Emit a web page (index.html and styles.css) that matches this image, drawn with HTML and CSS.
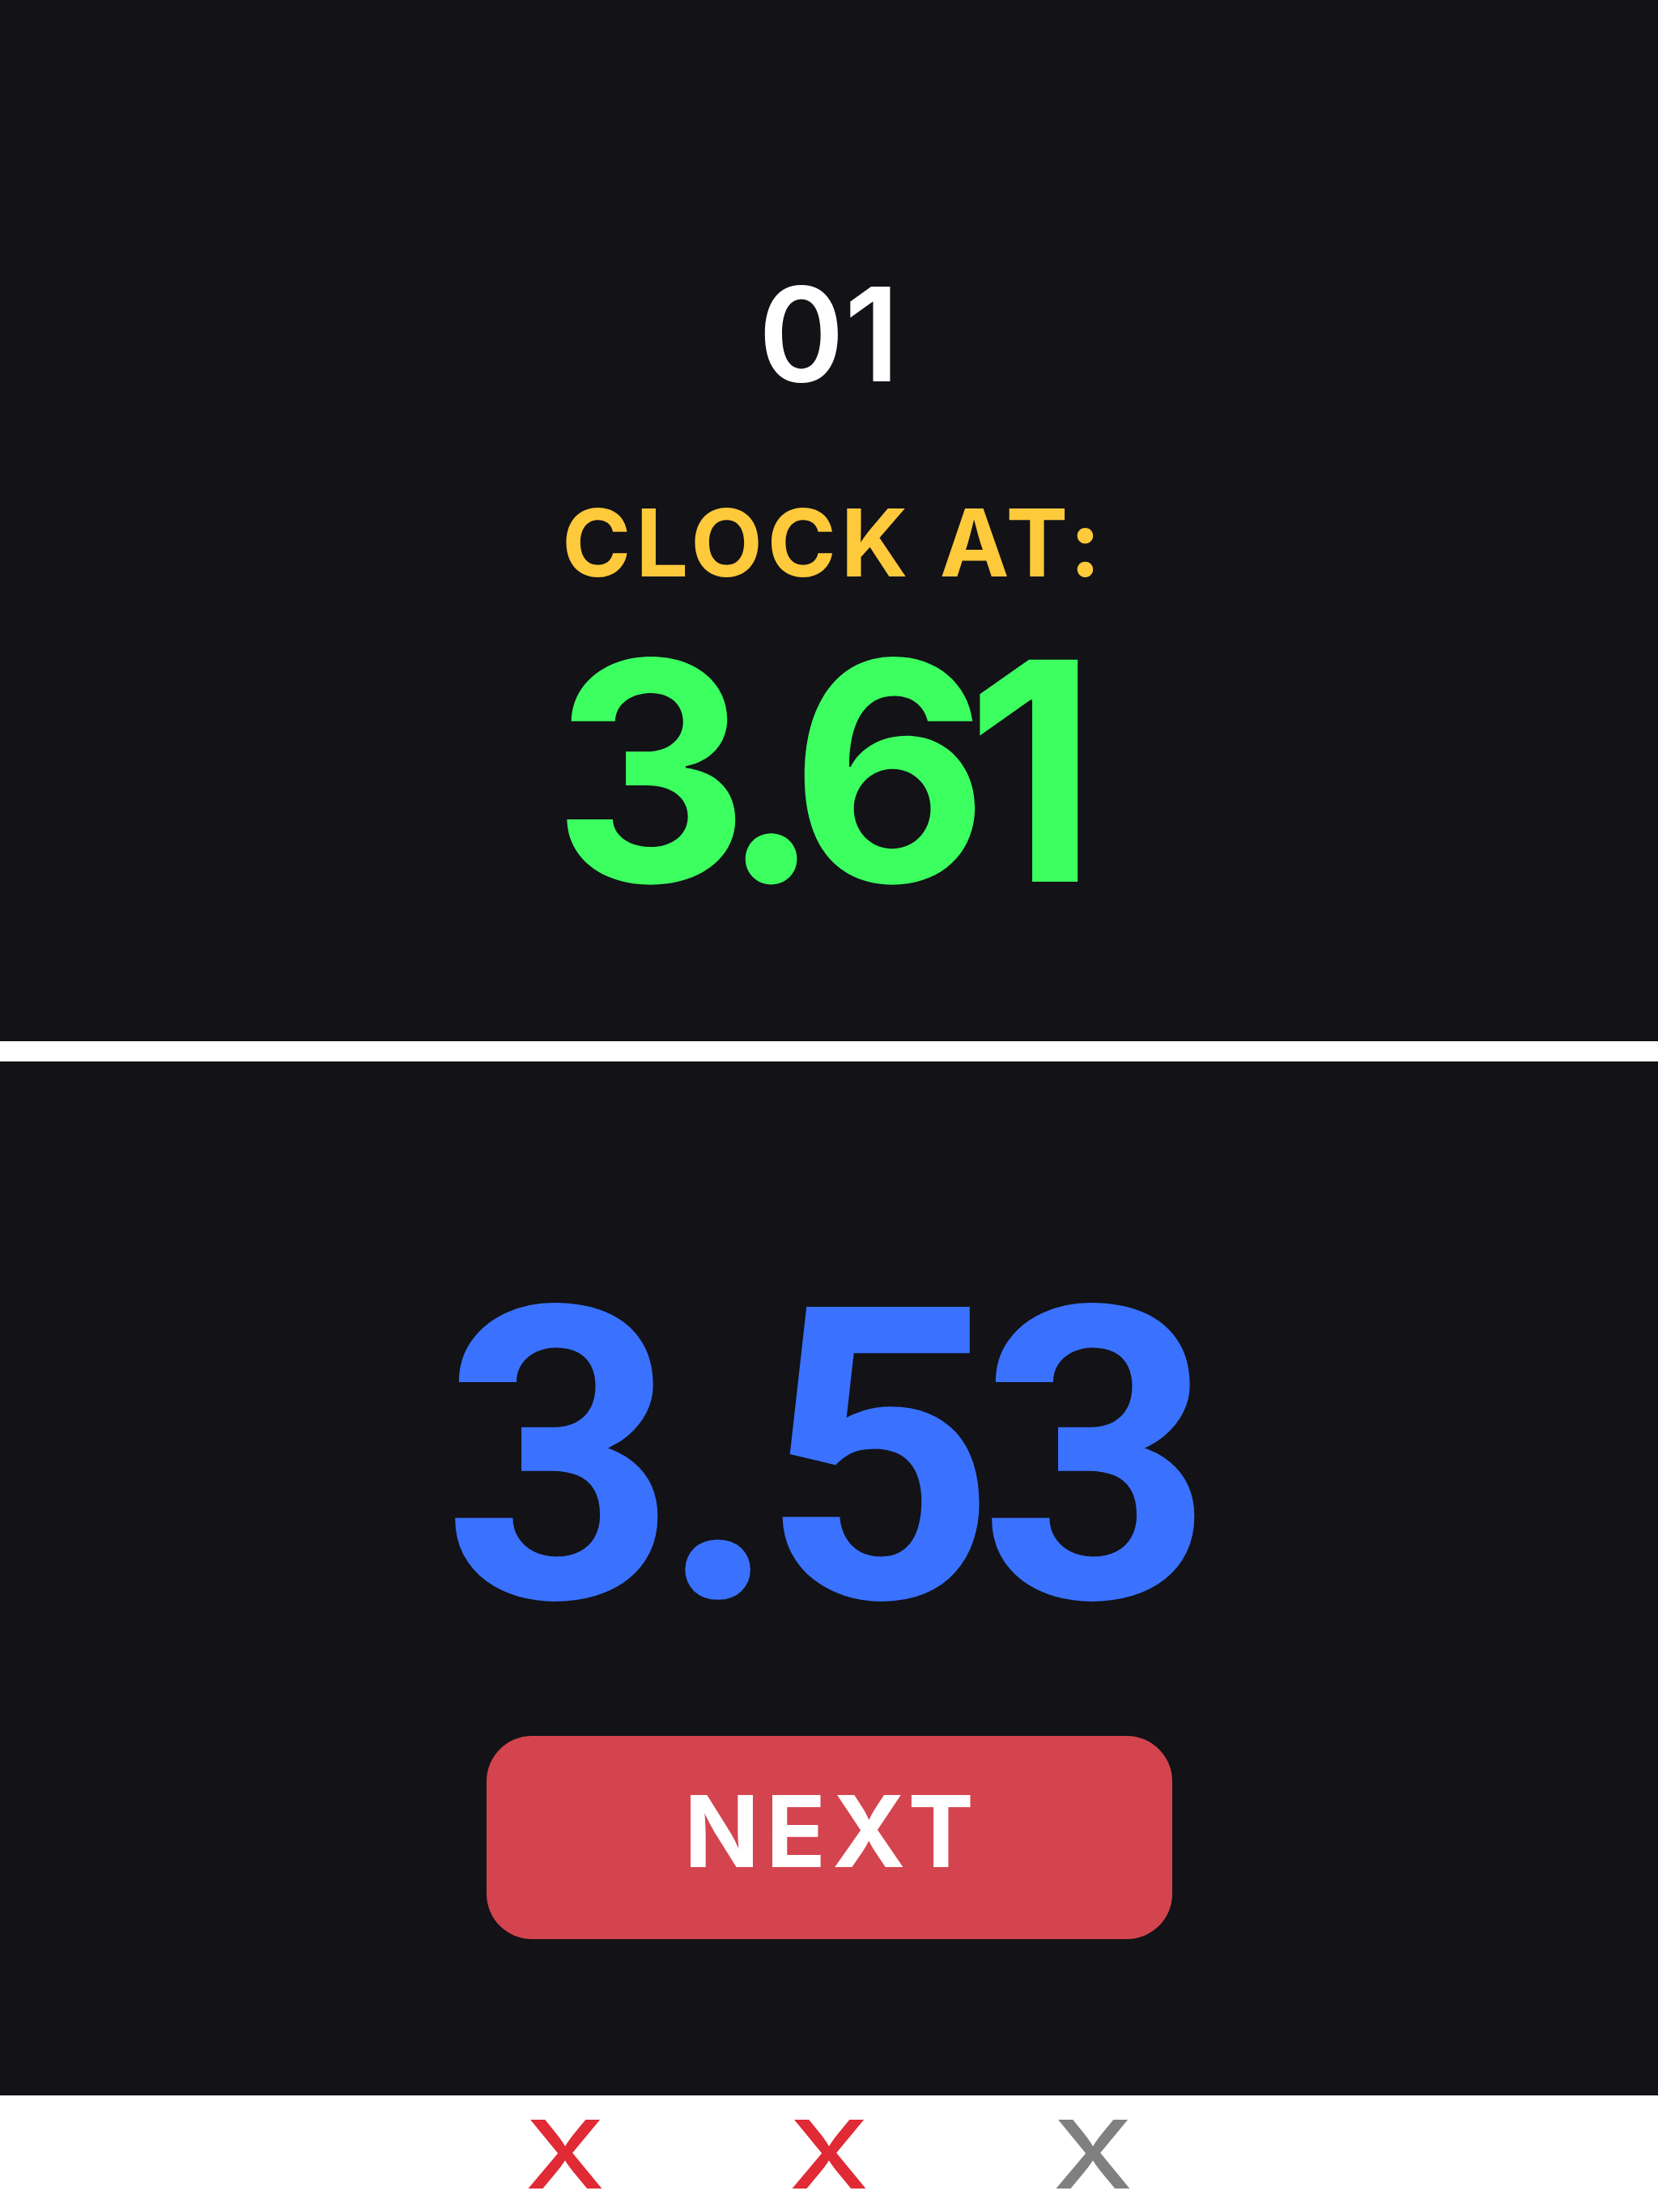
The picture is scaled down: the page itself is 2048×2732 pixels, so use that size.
FILE: index.html
```html
<!DOCTYPE html>
<html lang="en">
<head>
<meta charset="utf-8">
<title>Clock At</title>
<link rel="stylesheet" href="styles.css">
</head>
<body>
  <main class="app">
    <section class="panel panel-top">
      <div class="round">01</div>
      <div class="label">CLOCK AT:</div>
      <div class="target">3.61</div>
    </section>
    <section class="panel panel-bottom">
      <div class="result">3.53</div>
      <button class="next" type="button">NEXT</button>
    </section>
    <footer class="marks">
      <span class="mark mark-miss">X</span>
      <span class="mark mark-miss">X</span>
      <span class="mark mark-left">X</span>
    </footer>
  </main>
</body>
</html>
```
FILE: styles.css
```css
* { box-sizing: border-box; }
html, body { margin: 0; padding: 0; }
body {
  background: #ffffff;
  font-family: Inter, "Noto Sans", "Liberation Sans", sans-serif;
}
.app {
  width: 2048px;
  height: 2732px;
  display: flex;
  flex-direction: column;
  gap: 25px;
}
.panel {
  background: #121217;
  display: flex;
  flex-direction: column;
  align-items: center;
}
.panel-top {
  height: 1286px;
  padding-top: 332px;
}
.panel-bottom {
  height: 1277px;
  padding-top: 237px;
  margin-bottom: -25px;
}
.round {
  color: #ffffff;
  font-size: 161px;
  line-height: 1;
  font-weight: 600;
}
.label {
  margin-top: 120px;
  color: #ffc93c;
  font-size: 115px;
  line-height: 1;
  font-weight: 700;
  letter-spacing: 6px;
  padding-left: 12px;
}
.target {
  margin-top: 36px;
  color: #3cff60;
  font-size: 377px;
  line-height: 1;
  font-weight: 700;
  letter-spacing: -28px;
  margin-right: 38px;
}
.result {
  color: #3a72ff;
  font-family: Roboto, "Noto Sans", sans-serif;
  font-size: 505px;
  line-height: 1;
  font-weight: 700;
  letter-spacing: -21px;
  margin-right: 23px;
}
.next {
  margin-top: 91px;
  width: 847px;
  height: 251px;
  border: none;
  border-radius: 56px;
  background: #d4444e;
  color: #ffffff;
  font-family: inherit;
  font-size: 122px;
  line-height: 1;
  font-weight: 700;
  letter-spacing: 8px;
  padding: 0 0 16px 8px;
  display: flex;
  align-items: center;
  justify-content: center;
}
.marks {
  height: 144px;
  padding-top: 14px;
  display: grid;
  grid-template-columns: repeat(3, 326px);
  justify-content: center;
  justify-items: center;
}
.mark {
  display: inline-block;
  font-size: 117px;
  line-height: 1;
  font-weight: 500;
  transform: scaleX(1.2);
}
.mark-miss { color: #e02a35; }
.mark-left { color: #808080; }
```
